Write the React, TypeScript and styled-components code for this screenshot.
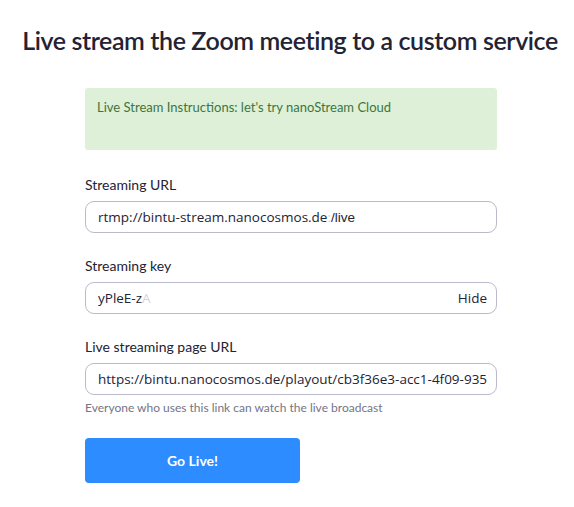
import React from 'react';
import styled, { createGlobalStyle } from 'styled-components';

const GlobalStyle = createGlobalStyle`
  body {
    margin: 0;
    background: #ffffff;
    font-family: Lato, "Liberation Sans", sans-serif;
    color: #232333;
  }
`;

const Page = styled.div`
  width: 574px;
  padding-top: 24px;
`;

const Title = styled.h1`
  margin: 0;
  text-align: center;
  white-space: nowrap;
  font-size: 25px;
  letter-spacing: -0.4px;
  line-height: 32px;
  font-weight: 600;
  color: #232333;
  padding-left: 6px;
`;

const Form = styled.div`
  margin: 32px 0 0 85px;
  width: 412px;
  display: flex;
  flex-direction: column;
`;

const Notice = styled.div`
  height: 62px;
  box-sizing: border-box;
  padding: 10px 12px;
  background: #dff0d8;
  color: #3c763d;
  border-radius: 3px;
  font-size: 13px;
  line-height: 18px;
  margin-bottom: 25px;
`;

const Field = styled.div<{ $last?: boolean }>`
  display: flex;
  flex-direction: column;
  margin-bottom: ${(p) => (p.$last ? '0' : '23px')};
`;

const Label = styled.label`
  font-size: 14px;
  line-height: 20px;
  color: #232333;
  margin-bottom: 6px;
`;

const InputBox = styled.div`
  height: 32px;
  box-sizing: border-box;
  border: 1px solid #babacc;
  border-radius: 9px;
  display: flex;
  align-items: center;
  justify-content: space-between;
  padding: 0 9px 0 12px;
  font-family: "Open Sans", "DejaVu Sans", sans-serif;
  font-size: 13.5px;
  color: #232333;
  overflow: hidden;
  white-space: nowrap;
`;

const Value = styled.span`
  overflow: hidden;
`;

const Faded = styled.span`
  color: #d4d4dc;
`;

const Pasted = styled.span`
  font-family: "Liberation Sans", Arial, sans-serif;
`;

const Toggle = styled.span`
  color: #232333;
`;

const Help = styled.div`
  margin-top: 5px;
  font-size: 12px;
  line-height: 16px;
  color: #747487;
`;

const GoLive = styled.button`
  margin-top: 22px;
  width: 215px;
  height: 45px;
  border: none;
  border-radius: 4px;
  background: #2d8cff;
  color: #ffffff;
  font-family: Lato, "Liberation Sans", sans-serif;
  font-size: 14px;
  font-weight: 700;
`;

export default function App() {
  return (
    <Page>
      <GlobalStyle />
      <Title>Live stream the Zoom meeting to a custom service</Title>
      <Form>
        <Notice>Live Stream Instructions: let's try nanoStream Cloud</Notice>
        <Field>
          <Label>Streaming URL</Label>
          <InputBox>
            <Value>
              rtmp://bintu-stream.nanocosmos.de<Faded>:</Faded>
              <Pasted>/live</Pasted>
            </Value>
          </InputBox>
        </Field>
        <Field>
          <Label>Streaming key</Label>
          <InputBox>
            <Value>
              yPleE-z<Faded>A</Faded>
            </Value>
            <Toggle>Hide</Toggle>
          </InputBox>
        </Field>
        <Field $last>
          <Label>Live streaming page URL</Label>
          <InputBox>
            <Value>https://bintu.nanocosmos.de/playout/cb3f36e3-acc1-4f09-935</Value>
          </InputBox>
          <Help>Everyone who uses this link can watch the live broadcast</Help>
        </Field>
        <div>
          <GoLive>Go Live!</GoLive>
        </div>
      </Form>
    </Page>
  );
}
